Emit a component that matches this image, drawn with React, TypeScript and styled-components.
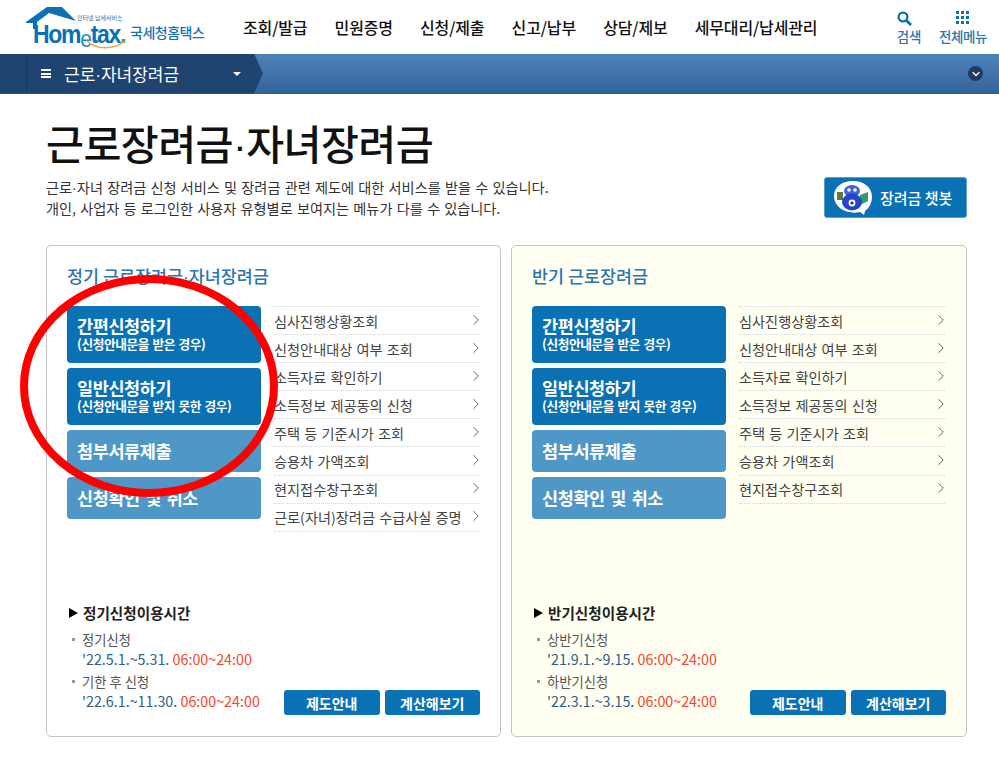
import React from "react";
import styled, { createGlobalStyle } from "styled-components";
import { ChevronRight, ChevronDown } from "lucide-react";

const GlobalStyle = createGlobalStyle`
    html, body {
        margin: 0;
        padding: 0;
        background: #fff;
        font-family: "Noto Sans CJK KR", "Noto Sans", sans-serif;
    }
    * { box-sizing: border-box; }
`;

const navItems = ["조회/발급", "민원증명", "신청/제출", "신고/납부", "상담/제보", "세무대리/납세관리"];

const serviceLinks = [
    "심사진행상황조회",
    "신청안내대상 여부 조회",
    "소득자료 확인하기",
    "소득정보 제공동의 신청",
    "주택 등 기준시가 조회",
    "승용차 가액조회",
    "현지접수창구조회",
];

interface Period {
    label: string;
    dates: string;
}

interface PanelData {
    title: string;
    usageTitle: string;
    links: string[];
    periods: Period[];
    tinted?: boolean;
}

const panels: PanelData[] = [
    {
        title: "정기 근로장려금·자녀장려금",
        usageTitle: "정기신청이용시간",
        links: [...serviceLinks, "근로(자녀)장려금 수급사실 증명"],
        periods: [
            { label: "정기신청", dates: "'22.5.1.~5.31." },
            { label: "기한 후 신청", dates: "'22.6.1.~11.30." },
        ],
    },
    {
        title: "반기 근로장려금",
        usageTitle: "반기신청이용시간",
        links: serviceLinks,
        tinted: true,
        periods: [
            { label: "상반기신청", dates: "'21.9.1.~9.15." },
            { label: "하반기신청", dates: "'22.3.1.~3.15." },
        ],
    },
];

// the CJK font has a full-width middle dot, the original is narrow
const withNarrowDot = (text: string) => {
    const [before, after] = text.split("·");
    if (after === undefined) return text;
    return (
        <>
            {before}
            <NarrowDot>·</NarrowDot>
            {after}
        </>
    );
};

const HouseLogo: React.FC = () => (
    <LogoRoof width="52" height="24" viewBox="0 0 52 24">
        <path d="M0 15 L21 0 H36 L50 14 L23 6 L11 15 V22 H7 V16 H0 Z" fill="#0a71b5" />
    </LogoRoof>
);

const LogoSmile: React.FC = () => (
    <SmileCurve width="40" height="10" viewBox="0 0 40 10">
        <path d="M1 1 C10 10 28 10 39 1" fill="none" stroke="#f2a33a" strokeWidth="1.4" />
    </SmileCurve>
);

const SearchIcon: React.FC = () => (
    <SearchGlyph width="15" height="15" viewBox="0 0 15 15">
        <circle cx="6" cy="6" r="4.4" fill="none" stroke="#0a71b5" strokeWidth="2.3" />
        <path d="M9.4 9.4 L14 14" stroke="#0a71b5" strokeWidth="2.8" />
    </SearchGlyph>
);

const ChatbotMascot: React.FC = () => (
    <svg width="42" height="36" viewBox="0 0 42 36">
        <path d="M21 1 C33 1 40 8 40 17 C40 24 36 29 33 31 L32 35 L28 32 C16 35 2 28 2 16 C2 7 10 1 21 1 Z" fill="#fff" />
        <rect x="5" y="12" width="6" height="8" fill="#5d7a3a" />
        <path d="M28 15 L36 12 V21 L28 25 Z" fill="#2f9a6a" />
        <ellipse cx="20" cy="11" rx="8" ry="6" fill="#3f63d8" />
        <ellipse cx="20" cy="22" rx="10" ry="8.5" fill="#2447c9" />
        <circle cx="17" cy="10" r="1.8" fill="#fff" />
        <circle cx="23" cy="10" r="1.8" fill="#fff" />
        <circle cx="20" cy="23" r="3.4" fill="#fff" />
        <circle cx="20" cy="23" r="1.6" fill="#22306e" />
    </svg>
);

const PanelCard: React.FC<{ data: PanelData }> = ({ data }) => (
    <Panel $tinted={data.tinted}>
        <PanelTitle>{withNarrowDot(data.title)}</PanelTitle>
        <Columns>
            <ActionColumn>
                <ActionButton $tall>
                    간편신청하기
                    <ActionNote>(신청안내문을 받은 경우)</ActionNote>
                </ActionButton>
                <ActionButton $tall>
                    일반신청하기
                    <ActionNote>(신청안내문을 받지 못한 경우)</ActionNote>
                </ActionButton>
                <ActionButton $muted>첨부서류제출</ActionButton>
                <ActionButton $muted>신청확인 및 취소</ActionButton>
            </ActionColumn>
            <LinkList>
                {data.links.map(link => (
                    <LinkRow key={link}>
                        {link}
                        <LinkArrow>
                            <ChevronRight size={18} strokeWidth={1.1} color="#444" />
                        </LinkArrow>
                    </LinkRow>
                ))}
            </LinkList>
        </Columns>
        <PanelFooter>
            <UsageBlock>
                <UsageTitle>{data.usageTitle}</UsageTitle>
                {data.periods.map(period => (
                    <PeriodItem key={period.label}>
                        <PeriodLabel>{period.label}</PeriodLabel>
                        <PeriodDates>
                            {period.dates} <Hours>06:00~24:00</Hours>
                        </PeriodDates>
                    </PeriodItem>
                ))}
            </UsageBlock>
            <FooterButtons>
                <SmallButton>제도안내</SmallButton>
                <SmallButton>계산해보기</SmallButton>
            </FooterButtons>
        </PanelFooter>
    </Panel>
);

export default function App() {
    return (
        <Page>
            <GlobalStyle />
            <Header>
                <Logo>
                    <HouseLogo />
                    <LogoTagline>인터넷 납세서비스</LogoTagline>
                    <LogoWord>
                        Hom<LogoE>e</LogoE>tax<LogoDot>.</LogoDot>
                    </LogoWord>
                    <LogoSmile />
                    <LogoKorean>국세청홈택스</LogoKorean>
                </Logo>
                <Nav>
                    {navItems.map(item => (
                        <NavItem key={item}>{item}</NavItem>
                    ))}
                </Nav>
                <HeaderTools>
                    <Tool>
                        <SearchIcon />
                        검색
                    </Tool>
                    <Tool>
                        <GridIcon>
                            {Array.from({ length: 9 }, (_, i) => (
                                <i key={i} />
                            ))}
                        </GridIcon>
                        전체메뉴
                    </Tool>
                </HeaderTools>
            </Header>
            <Bar>
                <BarMenu>
                    <MenuGlyph />
                    <BarLabel>{withNarrowDot("근로·자녀장려금")}</BarLabel>
                    <Caret />
                </BarMenu>
                <BarToggle>
                    <ChevronDown size={12} strokeWidth={2.5} color="#fff" />
                </BarToggle>
            </Bar>
            <Main>
                <PageTitle>{withNarrowDot("근로장려금·자녀장려금")}</PageTitle>
                <Intro>
                    <IntroText>
                        {withNarrowDot("근로·자녀 장려금 신청 서비스 및 장려금 관련 제도에 대한 서비스를 받을 수 있습니다.")}
                        <br />
                        개인, 사업자 등 로그인한 사용자 유형별로 보여지는 메뉴가 다를 수 있습니다.
                    </IntroText>
                    <ChatbotButton>
                        <ChatbotMascot />
                        장려금 챗봇
                    </ChatbotButton>
                </Intro>
                <Panels>
                    {panels.map(panel => (
                        <PanelCard key={panel.usageTitle} data={panel} />
                    ))}
                </Panels>
            </Main>
            <Highlight width="262" height="226" viewBox="0 0 262 226">
                <ellipse cx="130" cy="113" rx="125" ry="107" fill="none" stroke="#ff0000" strokeWidth="8" />
            </Highlight>
        </Page>
    );
}

const Page = styled.div`
    position: relative;
    width: 999px;
    height: 766px;
    overflow: hidden;
    background: #fff;
`;

const NarrowDot = styled.span`
    font-family: "Liberation Sans", sans-serif;
    line-height: 0;
`;

const Header = styled.header`
    display: flex;
    align-items: center;
    height: 54px;
    padding: 0 12px 0 26px;
`;

const Logo = styled.div`
    position: relative;
    width: 190px;
    height: 54px;
    flex: none;
`;

const LogoRoof = styled.svg`
    position: absolute;
    left: 0;
    top: 7px;
`;

const LogoTagline = styled.span`
    position: absolute;
    left: 51px;
    top: 14px;
    font-size: 6px;
    line-height: 8px;
    color: #2b6fa8;
    white-space: nowrap;
`;

const LogoWord = styled.span`
    position: absolute;
    left: 7px;
    top: 20px;
    font-family: "Liberation Sans", sans-serif;
    font-size: 25px;
    line-height: 28px;
    font-weight: 700;
    letter-spacing: -1.4px;
    color: #0a71b5;
    transform: scaleX(0.92);
    transform-origin: left;
    white-space: nowrap;
`;

const LogoE = styled.span`
    position: relative;
    top: 4px;
    font-size: 23px;
    font-weight: 400;
    color: #2a8ac4;
`;

const LogoDot = styled.span`
    color: #2f9a4a;
`;

const SmileCurve = styled.svg`
    position: absolute;
    left: 60px;
    top: 40px;
`;

const LogoKorean = styled.span`
    position: absolute;
    left: 104px;
    top: 22px;
    font-size: 14px;
    line-height: 20px;
    font-weight: 500;
    letter-spacing: -0.5px;
    color: #1673b4;
    white-space: nowrap;
`;

const Nav = styled.nav`
    display: flex;
    gap: 27.2px;
    margin-left: 27px;
`;

const NavItem = styled.a`
    font-size: 16px;
    font-weight: 500;
    letter-spacing: -0.15px;
    color: #111;
    white-space: nowrap;
`;

const HeaderTools = styled.div`
    display: flex;
    gap: 18px;
    margin-left: auto;
`;

const Tool = styled.a`
    display: flex;
    flex-direction: column;
    align-items: center;
    gap: 2px;
    font-size: 13.5px;
    line-height: 16px;
    font-weight: 500;
    letter-spacing: -0.4px;
    color: #2a76ae;
`;

const SearchGlyph = styled.svg`
    margin-right: 9px;
`;

const GridIcon = styled.span`
    display: grid;
    grid-template-columns: repeat(3, 3px);
    grid-auto-rows: 3px;
    gap: 2px;
    height: 15px;
    i {
        display: block;
        background: #0a71b5;
    }
`;

const Bar = styled.div`
    display: flex;
    align-items: center;
    justify-content: space-between;
    height: 40px;
    padding-right: 16px;
    background: linear-gradient(#4d82ba, #33659c);
    border-bottom: 1px solid #2f5f92;
`;

const BarMenu = styled.div`
    display: flex;
    align-items: center;
    width: 263px;
    height: 40px;
    padding: 0 22px 0 41px;
    color: #fff;
    background: linear-gradient(90deg, #1f4470 26px, #173a63 26px, #173a63 27px, #1f4470 27px);
    clip-path: polygon(0 0, 254px 0, 263px 50%, 254px 100%, 0 100%);
`;

const MenuGlyph = styled.span`
    width: 10px;
    height: 9px;
    border-top: 2px solid #fff;
    border-bottom: 2px solid #fff;
    background: linear-gradient(#fff, #fff) center / 100% 2px no-repeat;
`;

const BarLabel = styled.span`
    margin-left: 13px;
    font-size: 17px;
    line-height: 24px;
    white-space: nowrap;
`;

const Caret = styled.span`
    margin-left: auto;
    border-top: 4px solid #fff;
    border-left: 4px solid transparent;
    border-right: 4px solid transparent;
`;

const BarToggle = styled.span`
    display: flex;
    align-items: center;
    justify-content: center;
    width: 15px;
    height: 15px;
    border-radius: 50%;
    background: #1f3b60;
`;

const Main = styled.main`
    padding: 21px 32px 0 46px;
`;

const PageTitle = styled.h1`
    margin: 0;
    font-size: 41.3px;
    line-height: 54px;
    font-weight: 500;
    letter-spacing: -0.6px;
    color: #111;
`;

const Intro = styled.div`
    display: flex;
    align-items: flex-start;
    justify-content: space-between;
    margin-top: 8px;
    height: 68px;
`;

const IntroText = styled.p`
    margin: 0;
    font-size: 14.2px;
    line-height: 21px;
    word-spacing: 1px;
    color: #333;
`;

const ChatbotButton = styled.a`
    display: flex;
    align-items: center;
    gap: 6px;
    width: 143px;
    height: 41px;
    padding-left: 7px;
    border: 1px solid #5f9cc9;
    border-radius: 3px;
    background: #0a71b5;
    color: #fff;
    font-size: 15px;
    font-weight: 500;
    white-space: nowrap;
`;

const Panels = styled.div`
    display: flex;
    gap: 10px;
`;

const Panel = styled.section<{ $tinted?: boolean }>`
    display: flex;
    flex: 0 0 ${props => (props.$tinted ? "456px" : "455px")};
    flex-direction: column;
    height: 492px;
    padding: 18px 20px 20px;
    border: 1px solid #c4c4c4;
    border-radius: 5px;
    background: ${props => (props.$tinted ? "#fffff2" : "#fff")};
`;

const PanelTitle = styled.h2`
    margin: 0;
    font-size: 17.4px;
    line-height: 24px;
    font-weight: 500;
    color: #2a75b0;
`;

const Columns = styled.div`
    display: flex;
    gap: 13px;
    margin-top: 18px;
`;

const ActionColumn = styled.div`
    display: flex;
    flex-direction: column;
    gap: 5px;
    width: 194px;
    flex: none;
`;

const ActionButton = styled.a<{ $tall?: boolean; $muted?: boolean }>`
    display: flex;
    flex-direction: column;
    justify-content: center;
    height: ${props => (props.$tall ? "57px" : "42px")};
    padding: 0 0 ${props => (props.$tall ? "3px" : "1px")} 10px;
    border-radius: 4px;
    background: ${props => (props.$muted ? "#4f97c7" : "#0a71b5")};
    color: #fff;
    font-size: 17.5px;
    line-height: 20px;
    font-weight: 700;
    letter-spacing: -0.4px;
    word-spacing: 2px;
`;

const ActionNote = styled.span`
    font-size: 12.7px;
    line-height: 15px;
    letter-spacing: -0.4px;
    word-spacing: 1px;
    white-space: nowrap;
`;

const LinkList = styled.ul`
    width: 206px;
    margin: 0;
    padding: 0;
    list-style: none;
    border-top: 1px dotted #d4d4d4;
`;

const LinkRow = styled.li`
    display: flex;
    align-items: center;
    justify-content: space-between;
    height: 28.1px;
    border-bottom: 1px dotted #d4d4d4;
    font-size: 14.2px;
    word-spacing: 1px;
    color: #444;
    white-space: nowrap;
`;

const LinkArrow = styled.span`
    display: flex;
    margin: -2px -5px 0 0;
`;

const PanelFooter = styled.div`
    display: flex;
    align-items: flex-end;
    justify-content: space-between;
    margin-top: auto;
`;

const UsageBlock = styled.div`
    padding-bottom: 5px;
`;

const UsageTitle = styled.div`
    position: relative;
    margin-bottom: 8px;
    padding-left: 16px;
    font-size: 14.6px;
    line-height: 18px;
    font-weight: 700;
    color: #222;
    &::before {
        content: "";
        position: absolute;
        left: 2px;
        top: 4px;
        border-left: 9px solid #000;
        border-top: 5px solid transparent;
        border-bottom: 5px solid transparent;
    }
`;

const PeriodItem = styled.div`
    margin-bottom: 3px;
    padding-left: 15px;
    &:last-child {
        margin-bottom: 0;
    }
`;

const PeriodLabel = styled.div`
    position: relative;
    font-size: 13.3px;
    line-height: 19px;
    color: #555;
    &::before {
        content: "";
        position: absolute;
        left: -10px;
        top: 8px;
        width: 3px;
        height: 3px;
        background: #999;
    }
`;

const PeriodDates = styled.div`
    font-size: 14.3px;
    line-height: 20px;
    color: #2d5f86;
    white-space: nowrap;
`;

const Hours = styled.span`
    color: #f5452c;
`;

const FooterButtons = styled.div`
    display: flex;
    gap: 5px;
    margin-bottom: 1px;
`;

const SmallButton = styled.a`
    display: flex;
    align-items: center;
    justify-content: center;
    width: 95.5px;
    height: 25px;
    border-radius: 3px;
    background: #0a71b5;
    color: #fff;
    font-size: 14px;
    font-weight: 700;
`;

const Highlight = styled.svg`
    position: absolute;
    left: 19px;
    top: 273px;
    pointer-events: none;
`;
